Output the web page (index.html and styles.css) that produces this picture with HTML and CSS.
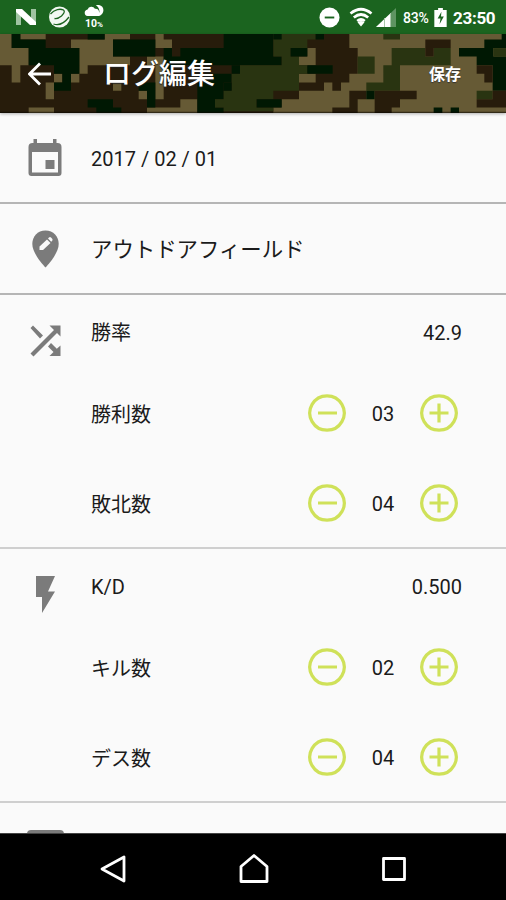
FILE: index.html
```html
<!DOCTYPE html>
<html lang="ja">
<head>
<meta charset="utf-8">
<title>ログ編集</title>
<link rel="stylesheet" href="styles.css">
</head>
<body>
<svg class="defs" width="0" height="0">
  <symbol id="minus" viewBox="0 0 38 38"><path d="M10 19h19M19 1.8a17.2 17.2 0 1 0 .01 0z" fill="none" stroke="#cfe159" stroke-width="3.2"/></symbol>
  <symbol id="plus" viewBox="0 0 38 38"><path d="M9.5 19h19M19 9.5v19M19 1.8a17.2 17.2 0 1 0 .01 0z" fill="none" stroke="#cfe159" stroke-width="3.2"/></symbol>
</svg>
<div class="screen">
  <div class="status">
    <svg class="s-n" viewBox="0 0 20 16"><path d="M0 0h5v16H0zM15 0h5v16h-5z" fill="#9fc3a1"/><path d="M0 0h6l14 13v3h-6L0 3z" fill="#fff"/></svg>
    <svg class="s-ball" viewBox="0 0 22 22"><circle cx="11" cy="11" r="10.500" fill="#f2f8f2"/><path d="M2 8C6 3 12 2.500 15 4c2 1.500 0 4-2 6-3 2.500-5 3-7 2.500M5 18c6 2 11-1 15.500-7" fill="none" stroke="#1b641f" stroke-width="1.300"/></svg>
    <div class="weather">
      <svg viewBox="0 0 22 13"><path d="M4 12a4 3.700 0 0 1 0-7.200A4.500 4.500 0 0 1 12 4a4 4 0 0 1 1 8zM13 0c6-1 9 3 8 7-1 4-4 5-7 5 4-3 4-8-1-12z" fill="#fff"/></svg>
      <span>10<small>%</small></span>
    </div>
    <div class="status-right">
      <svg class="s-dnd" viewBox="0 0 22 22"><circle cx="11" cy="11" r="10.500" fill="#fff"/><path d="M6 11h10" stroke="#1b641f" stroke-width="2"/></svg>
      <svg class="s-wifi" viewBox="0 0 24 20"><path d="M1.500 6.500q10.500-8.500 21 0M4.800 10.500q7.200-6 14.400 0M8.200 14q3.800-3 7.600 0" fill="none" stroke="#fff" stroke-width="2.700"/><path d="M8.500 15.300q3.500-2.500 7 0L12 19.500z" fill="#fff"/></svg>
      <svg class="s-signal" viewBox="0 0 20 19"><path d="M20 0v19H0z" fill="#5e9461"/><path d="M14 5.700V19H0z" fill="#fff"/><path d="M8.500 10v9M14.500 5v14" stroke="#a9c8aa"/></svg>
      <span class="pct">83%</span>
      <svg class="s-batt" viewBox="0 0 13 20"><path d="M4 0h5v2h4v18H0V2h4z" fill="#fff"/><path d="M7.500 4L3.500 11h3l-1 6 4.500-8H7z" fill="#1b641f"/></svg>
      <span class="time">23:50</span>
    </div>
  </div>
  <header class="bar">
    <svg class="camo" viewBox="0 102 1518 235" preserveAspectRatio="none">
      <path fill="#271c0b" d="M0 102H1518V337H0z"/>
      <path fill="#665a35" d="M0 102H35V144H0zM0 144H86V195H0zM35 195H61V246H35zM61 102H137V118H61zM162 220H187V246H162zM213 220H238V246H213zM137 246H162V296H137zM86 321H162V337H86zM213 118H339V144H213zM238 144H339V169H238zM238 169H390V195H238zM238 195H263V220H238zM314 102H390V118H314zM466 102H491V118H466zM466 118H516V144H466zM441 169H491V195H441zM466 195H491V296H466zM416 271H441V296H416zM339 246H364V271H339zM441 321H592V337H441zM541 296H592V337H541z"/>
      <path fill="#665a35" d="M922 144H947V169H922zM897 169H947V195H897zM897 220H947V246H897zM972 246H997V271H972zM897 271H1048V296H897zM845 296H1048V321H845zM820 321H997V337H820zM1023 246H1099V271H1023zM1048 220H1518V246H1048zM1048 102H1518V144H1048zM1073 144H1518V220H1073zM1099 246H1518V296H1099zM1073 296H1518V337H1073z"/>
      <path fill="#001803" d="M35 102H61V144H35zM61 118H137V144H61zM86 144H238V195H86zM162 195H238V220H162zM187 220H213V271H187zM162 246H187V271H162zM263 102H314V118H263zM263 296H339V321H263zM289 321H364V337H289zM339 118H466V169H339zM491 144H516V246H491zM416 246H466V271H416zM441 271H466V321H441zM541 144H671V195H541zM516 169H541V195H516zM671 102H820V195H671zM820 169H845V195H820zM592 220H695V246H592zM592 246H671V296H592zM592 296H645V321H592zM592 321H671V337H592z"/>
      <path fill="#293411" d="M820 102H947V118H820zM820 118H922V144H820zM820 144H872V169H820zM845 169H897V195H845zM720 195H922V220H720zM695 220H897V271H695zM671 271H820V296H671zM645 296H770V321H645zM671 321H820V332H671zM1073 169H1124V220H1073zM1150 102H1200V118H1150zM1175 144H1276V195H1175zM1276 169H1301V195H1276zM1301 144H1352V195H1301zM1150 195H1200V246H1150zM1099 246H1200V271H1099zM1430 271H1478V296H1430z"/>
      <path fill="#001803" d="M820 102H845V118H820zM872 144H922V169H872zM695 195H720V220H695zM671 246H695V271H671zM922 195H998V220H922zM770 296H845V321H770zM947 102H972V118H947zM1099 271H1124V296H1099zM1505 102H1518V118H1505zM1453 118H1518V144H1453zM1377 144H1480V169H1377zM1430 169H1518V195H1430zM1478 195H1518V271H1478zM1301 321H1327V337H1301zM1352 321H1377V337H1352z"/>
      <path fill="#271c0b" d="M1276 118H1352V144H1276zM1276 144H1301V169H1276zM1124 271H1250V296H1124zM1124 296H1200V321H1124zM1124 321H1175V337H1124zM1430 195H1478V220H1430zM1453 220H1478V246H1453zM1478 271H1518V296H1478zM1430 296H1518V321H1430z"/>
      <path fill="#293411" d="M1480 144H1518V169H1480z"/>
      <path fill="#080500" fill-opacity=".55" d="M0 333H1518V337H0z"/>
    </svg>
    <svg class="back" viewBox="0 0 24 24"><path d="M23 12H2M12 1.500L1.500 12 12 22.500" fill="none" stroke="#fff" stroke-width="2.800"/></svg>
    <h1>ログ編集</h1>
    <span class="save">保存</span>
  </header>
  <main>
    <section class="row">
      <svg class="icon" viewBox="0 0 36 38"><path fill="#7b7b7b" fill-rule="evenodd" d="M6.500 0H10v4h16V0h3.500v4h1q4 0 4 4v26q0 3-3 3H4.500q-3 0-3-3V8q0-4 4-4h1zM5 13v20.500h26V13zM18.500 21h9v9h-9z"/></svg>
      <span>2017 / 02 / 01</span>
    </section>
    <section class="row">
      <svg class="icon" viewBox="0 0 36 38"><path fill="#7b7b7b" d="M18.500 .5C10.500 .5 5.300 6.500 5.300 14 5.300 24 18.500 37.500 18.500 37.500S31.700 24 31.700 14C31.700 6.500 26.500 .5 18.500 .5z"/><path fill="#fafafa" d="M12.500 20v-3.500L20 9.500l3.500 3.500-7.500 7zM21 8.500l1-1q1-.8 2 0l1.200 1.200q.8 1 0 2l-1 1z"/></svg>
      <span class="place">アウトドアフィールド</span>
    </section>
    <section class="group">
      <div class="line head">
        <svg class="icon" viewBox="0 0 36 38"><path fill="#7b7b7b" d="M3.500 6L6 3.500l10 10-3 3zM22.500 3.500h11v11L30 11 6.500 34.500l-3-3L27 8zM24 21l5.800 5.800 3.700-3.300V34h-11l4-4-5.500-5.500z"/></svg>
        <span class="label">勝率</span><span>42.9</span>
      </div>
      <div class="line"><span class="label">勝利数</span><div class="step"><svg><use href="#minus"/></svg><span>03</span><svg><use href="#plus"/></svg></div></div>
      <div class="line"><span class="label">敗北数</span><div class="step"><svg><use href="#minus"/></svg><span>04</span><svg><use href="#plus"/></svg></div></div>
    </section>
    <section class="group">
      <div class="line head">
        <svg class="icon" viewBox="0 0 36 38"><path fill="#7b7b7b" d="M9 0H28L21 15.500H28L15 37V21H9z"/></svg>
        <span class="label latin">K/D</span><span>0.500</span>
      </div>
      <div class="line"><span class="label">キル数</span><div class="step"><svg><use href="#minus"/></svg><span>02</span><svg><use href="#plus"/></svg></div></div>
      <div class="line"><span class="label">デス数</span><div class="step"><svg><use href="#minus"/></svg><span>04</span><svg><use href="#plus"/></svg></div></div>
    </section>
    <section class="next"><div class="next-icon"></div></section>
  </main>
  <nav>
    <svg viewBox="0 0 30 30"><path d="M25 3v24L3 15z"/></svg>
    <svg viewBox="0 0 30 30"><path d="M2 27.500V12.500L15 1.500l13 11v15z"/></svg>
    <svg viewBox="0 0 30 30"><path d="M4.500 4.500h21v21h-21z"/></svg>
  </nav>
</div>
</body>
</html>
```
FILE: styles.css
```css
* { box-sizing: border-box; }
body { margin: 0; background: #fafafa; color: #1b1b1b; font: 20px/24px Roboto, "Noto Sans CJK JP", sans-serif; }
svg { display: block; flex: none; }
.defs { position: absolute; }
.screen { width: 506px; height: 900px; display: flex; flex-direction: column; overflow: hidden; }

.status { height: 34px; flex: none; display: flex; align-items: center; padding: 0 10px 0 16px; background: #1b641f; color: #fff; }
.s-n { width: 20px; height: 16px; margin-right: 12px; }
.s-ball { width: 23px; height: 22px; margin-right: 12px; }
.weather { width: 22px; display: flex; flex-direction: column; align-items: center; }
.weather svg { width: 22px; height: 12px; margin-top: 1px; }
.weather span { font-size: 10.5px; font-weight: 700; line-height: 11px; margin-top: 1px; }
.weather small { font-size: 8px; }
.status-right { margin-left: auto; display: flex; align-items: center; }
.s-dnd { width: 21px; height: 21px; margin-right: 9px; }
.s-wifi { width: 24px; height: 20px; margin-right: 3px; }
.s-signal { width: 20px; height: 19px; margin-right: 7px; }
.pct { width: 31px; font-size: 14px; font-weight: 500; letter-spacing: -.2px; padding-top: 2px; }
.s-batt { width: 13px; height: 19px; margin-right: 6px; }
.time { width: 43px; font-size: 17px; font-weight: 700; white-space: nowrap; letter-spacing: -.3px; padding-top: 2px; }

.bar { position: relative; z-index: 1; height: 79px; flex: none; display: flex; align-items: center; padding: 0 45px 0 28px; color: #fff; box-shadow: 0 1px 3px rgba(0,0,0,.3); }
.camo { position: absolute; inset: 0; width: 100%; height: 100%; }
.back { position: relative; width: 24px; height: 24px; margin-right: 51px; }
h1 { position: relative; margin: 0; padding-top: 3px; font-size: 28px; line-height: 34px; font-weight: 500; text-shadow: 0 1px 1px #222; }
.save { position: relative; margin-left: auto; padding-top: 2px; font-size: 16px; font-weight: 700; text-shadow: 0 1px 1px #333; }

main { flex: 1; min-height: 0; overflow: hidden; }
.icon { width: 36px; height: 38px; }
.row { height: 91px; display: flex; align-items: center; gap: 28px; padding: 0 27px; border-bottom: 2px solid #b5b5b5; }
.row span { padding-top: 2px; }
.row .place { padding-top: 3px; font-size: 21.4px; }
.group { height: 254px; padding: 0 44px 0 91px; border-bottom: 2px solid #cfcfcf; }
.line { height: 90px; display: flex; align-items: center; }
.line > span { padding-top: 2px; }
.head { height: 74px; }
.head .icon { margin: 18px 28px 0 -64px; }
.line .label { margin-right: auto; padding-top: 2px; }
.step { display: flex; align-items: center; margin-right: 4px; margin-bottom: 2px; }
.step svg { width: 38px; height: 38px; }
.step span { width: 74px; text-align: center; padding-top: 2px; }
.next { padding: 27px 0 0 27px; }
.next-icon { width: 37px; height: 20px; border-radius: 4px; background: #7b7b7b; }

nav { height: 67px; flex: none; display: flex; align-items: center; justify-content: space-between; padding: 3px 97px 0 99px; background: #000; border-top: 1px solid #444; }
nav svg { width: 30px; height: 30px; }
nav path { fill: none; stroke: #fff; stroke-width: 2.8; stroke-linejoin: round; }
```
